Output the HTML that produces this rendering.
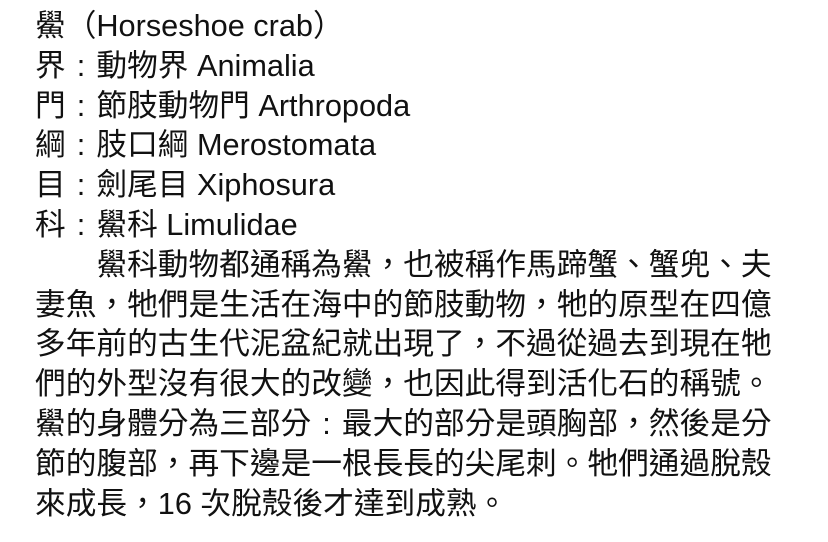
<!DOCTYPE html>
<html lang="zh-TW"><head><meta charset="utf-8"><style>
html,body{margin:0;padding:0;background:#fff;width:828px;height:542px;overflow:hidden}
.t{position:absolute;left:35px;top:6px;font-family:"Liberation Sans","Noto Sans CJK TC",sans-serif;font-size:30.7px;line-height:39.8px;color:#111;white-space:pre}
.c{display:inline-block;width:1em;text-align:center}
</style></head><body>
<div class="t" lang="zh-TW">鱟（Horseshoe crab）
界<span class="c">:</span>動物界 Animalia
門<span class="c">:</span>節肢動物門 Arthropoda
綱<span class="c">:</span>肢口綱 Merostomata
目<span class="c">:</span>劍尾目 Xiphosura
科<span class="c">:</span>鱟科 Limulidae
　　鱟科動物都通稱為鱟，也被稱作馬蹄蟹、蟹兜、夫
妻魚，牠們是生活在海中的節肢動物，牠的原型在四億
多年前的古生代泥盆紀就出現了，不過從過去到現在牠
們的外型沒有很大的改變，也因此得到活化石的稱號。
鱟的身體分為三部分<span class="c">:</span>最大的部分是頭胸部，然後是分
節的腹部，再下邊是一根長長的尖尾刺。牠們通過脫殼
來成長，16 次脫殼後才達到成熟。</div>
</body></html>
